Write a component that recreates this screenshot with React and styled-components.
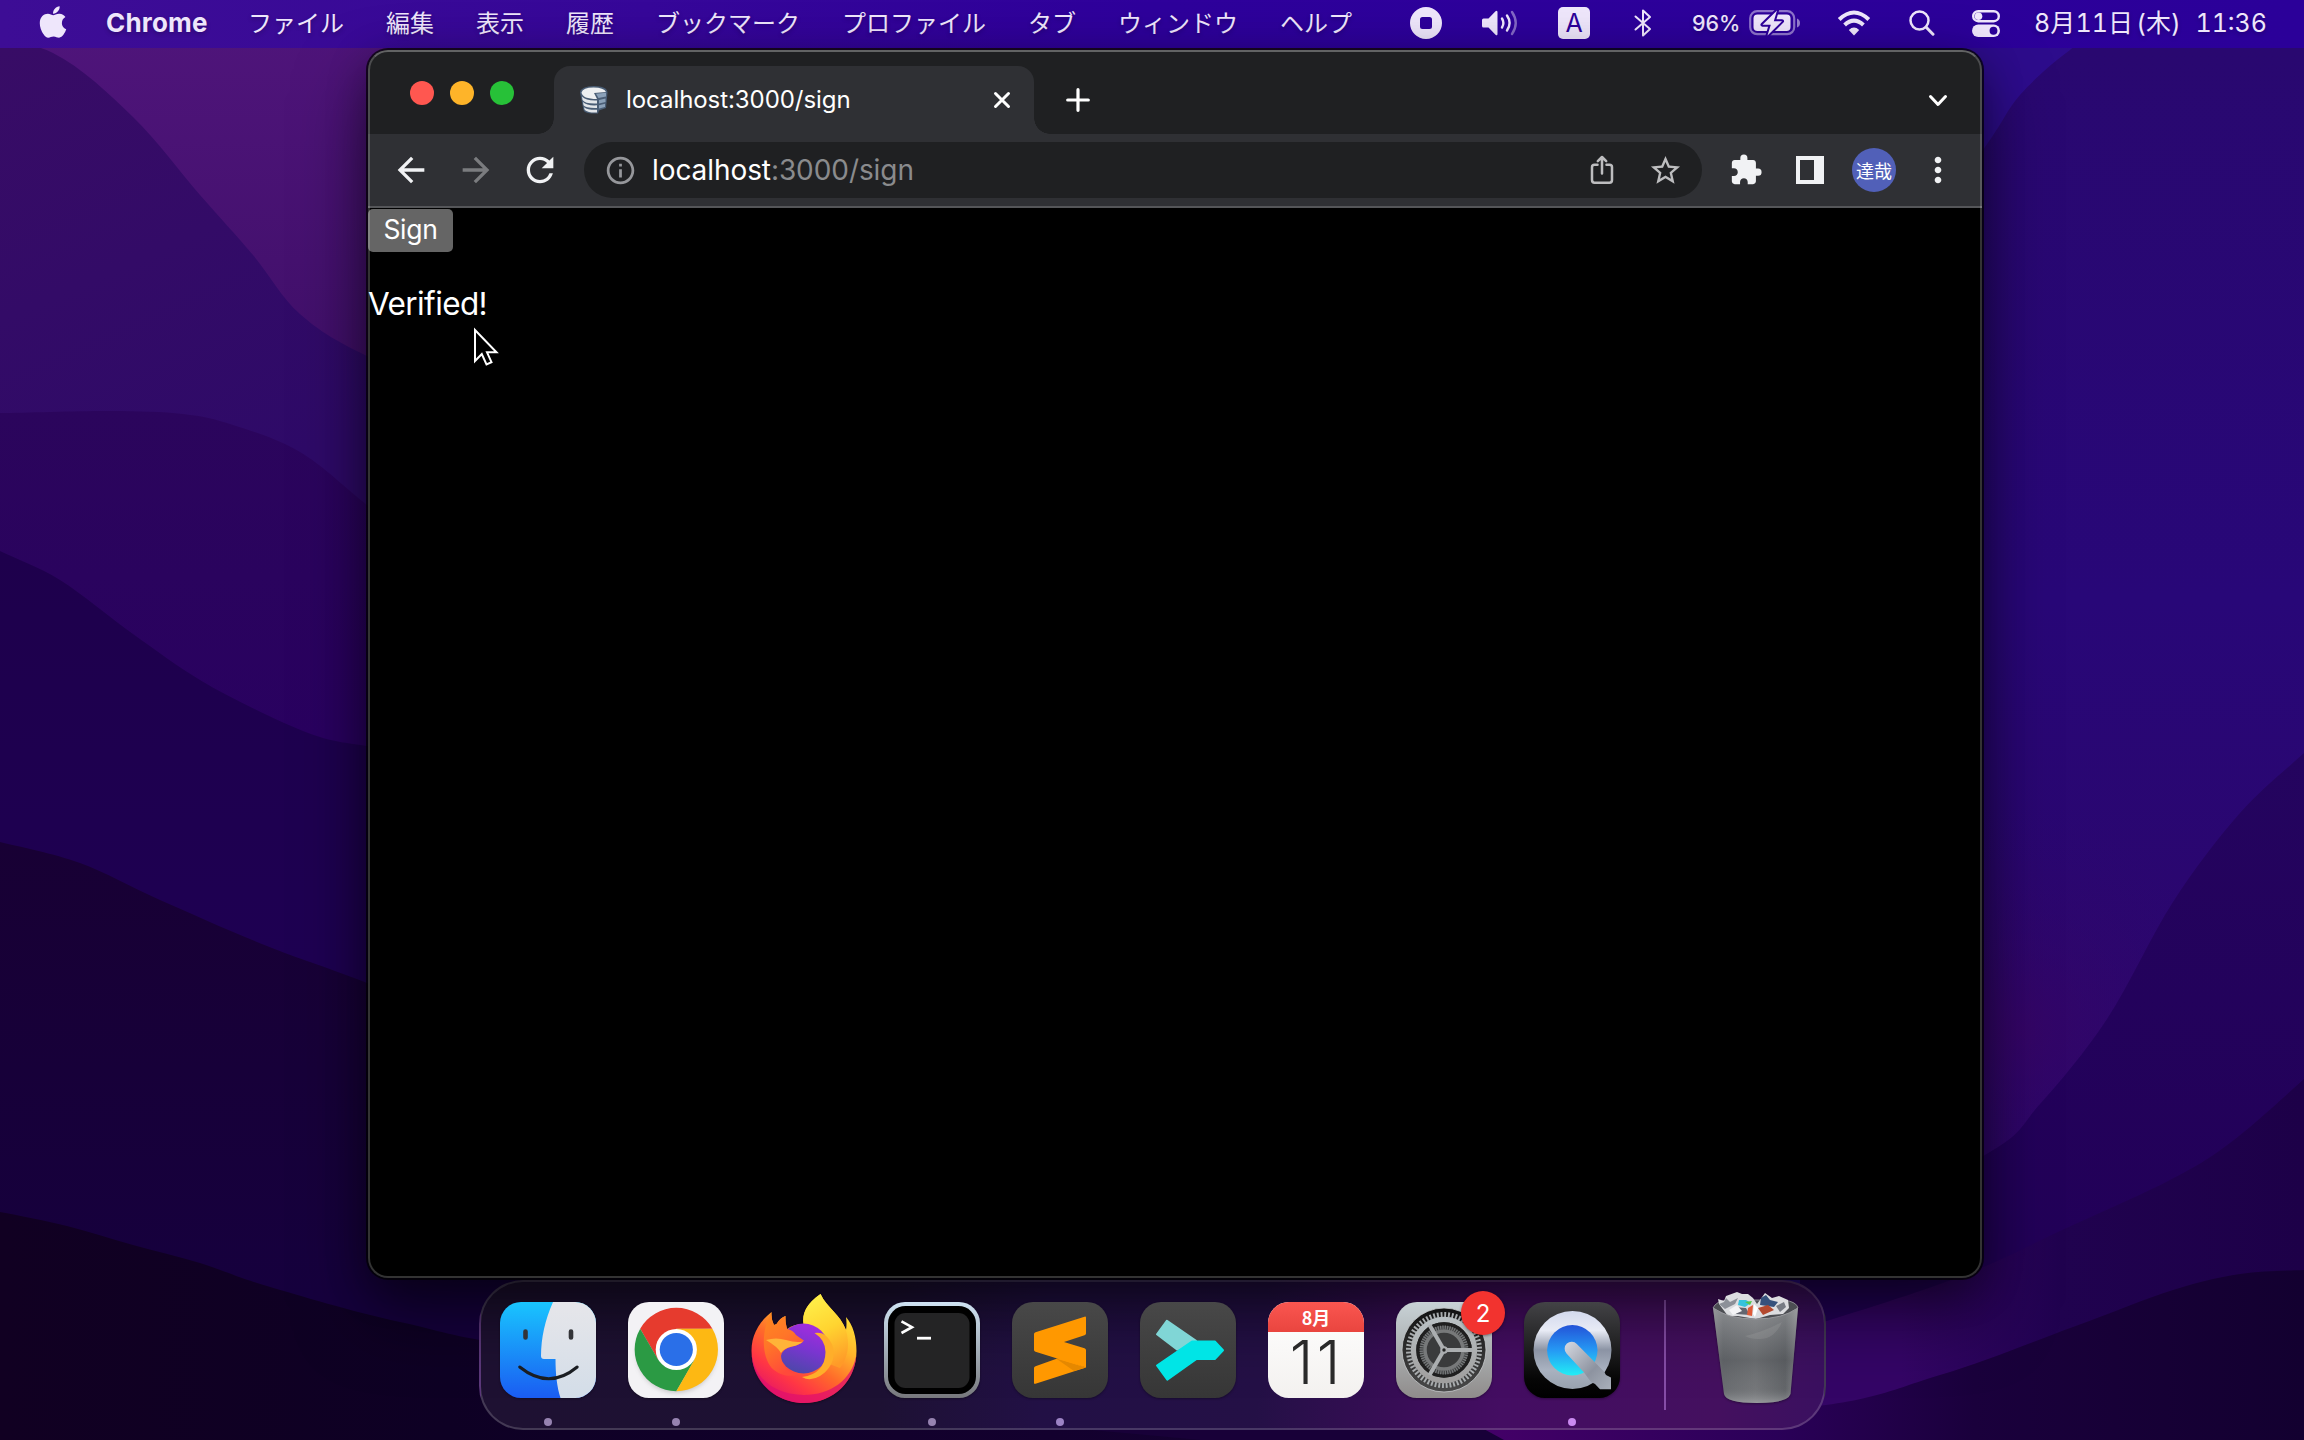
import React from 'react';
import styled, { createGlobalStyle } from 'styled-components';
import { FaApple } from 'react-icons/fa';
import {
  MdArrowBack,
  MdArrowForward,
  MdRefresh,
  MdInfoOutline,
  MdExtension,
  MdStarOutline,
  MdMoreVert,
} from 'react-icons/md';

const GlobalStyle = createGlobalStyle`
  * { box-sizing: border-box; }
  body {
    margin: 0;
    background: #14003a;
    overflow: hidden;
    font-family: Inter, 'Noto Sans CJK JP', 'Liberation Sans', sans-serif;
  }
`;

const Desktop = styled.div`
  position: relative;
  isolation: isolate;
  display: flex;
  flex-direction: column;
  align-items: flex-start;
  width: 2304px;
  height: 1440px;
  overflow: hidden;
`;

const WallpaperArt = styled.svg`
  position: absolute;
  inset: 0;
  z-index: -1;
  width: 2304px;
  height: 1440px;
`;

/* ---------- menu bar ---------- */

const MenuBar = styled.header`
  display: flex;
  align-items: center;
  justify-content: space-between;
  width: 100%;
  height: 48px;
  padding: 0 37px 2px 35px;
  color: #eee6fb;
  background: linear-gradient(90deg, #3d0d95 0%, #360799 28%, #2e009b 50%, #2b0099 100%);
  text-shadow: 0 2px 4px rgba(0, 0, 0, 0.25);
`;

const Menus = styled.nav`
  display: flex;
  align-items: center;
  padding-bottom: 2px;
`;

const AppleLogo = styled(FaApple)`
  font-size: 36px;
  margin-right: 35px;
  margin-top: -1px;
`;

const AppName = styled.span`
  width: 142px;
  font-size: 26px;
  font-weight: 700;
  letter-spacing: ${(p) => p.$tracking}px;
  white-space: nowrap;
`;

const MenuItems = styled.div`
  display: flex;
  gap: 42px;
`;

const MenuItem = styled.span`
  font-family: 'Noto Sans CJK JP', sans-serif;
  font-size: 24px;
  line-height: 36px;
  white-space: nowrap;
`;

const StatusIcons = styled.div`
  display: flex;
  align-items: center;
`;

const StatusSlot = styled.span`
  display: flex;
  align-items: center;
  margin-right: ${(p) => p.$after}px;
`;

const InputSource = styled.span`
  display: grid;
  place-items: center;
  width: 32px;
  height: 32px;
  border-radius: 5px;
  background: #eee6fb;
  color: #2d0099;
  font-size: 25px;
  text-shadow: none;
`;

const Percent = styled.span`
  width: 57px;
  font-size: 21.5px;
  font-weight: 500;
  letter-spacing: ${(p) => p.$tracking}px;
  white-space: nowrap;
`;

const Clock = styled.span`
  display: flex;
  align-items: baseline;
  justify-content: space-between;
  width: 233px;
  margin-top: -1px;
  font-size: 25px;
  line-height: 36px;
  font-variant-numeric: tabular-nums;
  white-space: nowrap;
`;

const ClockPart = styled.span`
  letter-spacing: ${(p) => p.$tracking}px;
`;

const Weekday = styled.span`
  margin-left: 3px;
`;

/* ---------- browser window ---------- */

const BrowserWindow = styled.section`
  position: relative;
  display: flex;
  flex-direction: column;
  width: 1614px;
  height: 1228px;
  margin: 2px 0 0 368px;
  border-radius: 20px;
  background: #000;
  box-shadow: 0 0 0 2px rgba(0, 0, 0, 0.7), 0 36px 70px rgba(0, 0, 0, 0.5), 0 10px 40px rgba(0, 0, 0, 0.3);
  &::after {
    content: '';
    position: absolute;
    inset: 0;
    border: 2px solid rgba(255, 255, 255, 0.2);
    border-top-color: rgba(255, 255, 255, 0.3);
    border-radius: 20px;
    pointer-events: none;
  }
`;

const TabStrip = styled.div`
  display: flex;
  align-items: flex-end;
  height: 84px;
  padding-right: 34px;
  border-radius: 20px 20px 0 0;
  background: #1f2022;
`;

const TrafficLights = styled.div`
  display: flex;
  gap: 16px;
  width: 186px;
  padding-left: 42px;
  align-self: flex-start;
  margin-top: 31px;
`;

const Light = styled.span`
  width: 24px;
  height: 24px;
  border-radius: 50%;
  background: ${(p) => p.$color};
`;

const Tab = styled.div`
  position: relative;
  display: flex;
  align-items: center;
  width: 480px;
  height: 68px;
  padding: 0 23px 0 25px;
  border-radius: 16px 16px 0 0;
  background: #2f3034;
  &::before,
  &::after {
    content: '';
    position: absolute;
    bottom: 0;
    width: 16px;
    height: 16px;
  }
  &::before {
    left: -16px;
    background: radial-gradient(circle at 0 0, transparent 15.5px, #2f3034 16px);
  }
  &::after {
    right: -16px;
    background: radial-gradient(circle at 100% 0, transparent 15.5px, #2f3034 16px);
  }
`;

const TabTitle = styled.span`
  flex: 1;
  margin: -1px 0 0 17px;
  color: #fff;
  font-size: 24px;
  letter-spacing: ${(p) => p.$tracking}px;
  white-space: nowrap;
`;

const NewTab = styled.span`
  display: flex;
  align-self: center;
  margin: 16px 0 0 32px;
`;

const TabSearch = styled.span`
  display: flex;
  align-self: center;
  margin: 17px 0 0 auto;
`;

const Toolbar = styled.div`
  display: flex;
  align-items: center;
  height: 74px;
  background: #2f3034;
  border-bottom: 2px solid #555659;
`;

const NavButton = styled.span`
  display: flex;
  margin-left: ${(p) => p.$before}px;
  color: ${(p) => (p.$dim ? '#7b7c7f' : '#f1f2f4')};
  font-size: ${(p) => p.$size}px;
`;

const AddressBar = styled.div`
  display: flex;
  align-items: center;
  width: 1118px;
  height: 56px;
  margin-left: 24px;
  padding: 0 19px 0 20px;
  border-radius: 28px;
  background: #1f2022;
  color: #bdbdbf;
`;

const InfoIcon = styled(MdInfoOutline)`
  font-size: 33px;
  color: #96979b;
`;

const Address = styled.span`
  flex: 1;
  margin-left: 15px;
  color: #8a8b8d;
  font-size: 28px;
  letter-spacing: ${(p) => p.$tracking}px;
  white-space: nowrap;
`;

const Host = styled.span`
  color: #fff;
`;

const StarIcon = styled(MdStarOutline)`
  margin-left: 34px;
  font-size: 35px;
`;

const Avatar = styled.span`
  display: grid;
  place-items: center;
  width: 44px;
  height: 44px;
  margin-left: 28px;
  border-radius: 50%;
  background: #5160b8;
  color: #fff;
  font-family: 'Noto Sans CJK JP', sans-serif;
  font-size: 18px;
  line-height: 42px;
`;

const Page = styled.main`
  flex: 1;
  display: flex;
  flex-direction: column;
  align-items: flex-start;
  padding-top: 1px;
`;

const SignButton = styled.button`
  width: 85px;
  height: 43px;
  padding: 0 0 3px;
  border: 0;
  border-radius: 5px;
  background: #656565;
  color: #fff;
  font-family: Inter, 'Liberation Sans', sans-serif;
  font-size: 26.5px;
  letter-spacing: ${(p) => p.$tracking}px;
`;

const Result = styled.p`
  margin: 32px 0 0;
  color: #fff;
  font-family: Inter, 'Liberation Sans', sans-serif;
  font-size: 31.5px;
  line-height: 40px;
  letter-spacing: ${(p) => p.$tracking}px;
`;

const Pointer = styled.svg`
  position: absolute;
  left: 105px;
  top: 277px;
  width: 26px;
  height: 40px;
`;

/* ---------- dock ---------- */

const Dock = styled.footer`
  display: flex;
  width: 1347px;
  height: 150px;
  margin: 2px 0 0 479px;
  padding: 20px 0 0 19px;
  border: 2px solid rgba(255, 255, 255, 0.17);
  border-radius: 44px;
  background: linear-gradient(
    95deg,
    #1e1132 0%,
    #1d1133 30%,
    #221045 42%,
    #241046 58%,
    #370d55 68%,
    #440d62 76%,
    #44105f 92%,
    #3a1060 100%
  );
`;

const DockSlot = styled.div`
  position: relative;
  display: flex;
  flex-direction: column;
  align-items: center;
  width: 96px;
  margin-right: ${(p) => p.$after ?? 32}px;
`;

const RunningDot = styled.i`
  width: 8px;
  height: 8px;
  margin-top: 20px;
  border-radius: 50%;
  background: ${(p) => p.$color};
`;

const IconArt = styled.svg`
  flex: none;
  width: 96px;
  height: 96px;
  overflow: visible;
  filter: drop-shadow(0 1px 1px rgba(0, 0, 0, 0.35));
`;

const CalendarTile = styled.div`
  display: flex;
  flex-direction: column;
  width: 96px;
  height: 96px;
  border-radius: 21px;
  overflow: hidden;
  background: linear-gradient(#fff, #f3f1ef);
  text-align: center;
`;

const CalendarMonth = styled.span`
  height: 30px;
  background: linear-gradient(#fa5650, #e9453f);
  color: #fff;
  font-family: 'Noto Sans CJK JP', sans-serif;
  font-size: 18px;
  font-weight: 700;
  line-height: 31px;
`;

const CalendarDay = styled.span`
  padding-right: 2px;
  color: #2a2a2a;
  font-family: Inter, sans-serif;
  font-size: 60px;
  font-weight: 300;
  line-height: 61px;
  letter-spacing: ${(p) => p.$tracking}px;
  margin-right: ${(p) => -p.$tracking}px;
`;

const Badge = styled.span`
  position: absolute;
  left: 65px;
  top: -11px;
  display: grid;
  place-items: center;
  width: 44px;
  height: 44px;
  border-radius: 50%;
  background: #f2332f;
  color: #fff;
  font-size: 24px;
  box-shadow: 0 1px 3px rgba(0, 0, 0, 0.4);
`;

const Divider = styled.span`
  width: 2px;
  height: 110px;
  margin: -2px 42px 0 0;
  background: rgba(190, 130, 225, 0.55);
`;

/* ---------- drawings ---------- */

/* Turns a list of points into a smooth curve (Catmull-Rom to Bezier). */
const curveThrough = (points) =>
  points.slice(0, -1).reduce((path, p1, i) => {
    const p0 = points[i - 1] ?? p1;
    const p2 = points[i + 1];
    const p3 = points[i + 2] ?? p2;
    const c1 = [p1[0] + (p2[0] - p0[0]) / 6, p1[1] + (p2[1] - p0[1]) / 6];
    const c2 = [p2[0] - (p3[0] - p1[0]) / 6, p2[1] - (p3[1] - p1[1]) / 6];
    return `${path}C${c1.join(' ')} ${c2.join(' ')} ${p2.join(' ')}`;
  }, `M${points[0].join(' ')}`);

const LEFT_RIDGES = [
  { fill: 'wB', points: [[-40, 30], [53, 53], [133, 117], [200, 195], [253, 255], [300, 314], [367, 356], [480, 400]] },
  { fill: 'wC', points: [[-40, 412], [0, 413], [110, 411], [183, 414], [233, 425], [300, 452], [367, 505], [470, 590]] },
  { fill: 'wD', points: [[-40, 530], [0, 551], [60, 580], [133, 634], [200, 680], [267, 715], [320, 737], [367, 746], [470, 760]] },
  { fill: 'wE', points: [[-40, 834], [0, 842], [80, 863], [160, 900], [267, 946], [367, 983], [560, 1060], [1500, 1200]] },
  { fill: 'wF', points: [[-40, 1206], [0, 1212], [67, 1226], [133, 1245], [200, 1263], [267, 1286], [400, 1322], [560, 1350], [1000, 1380], [1500, 1400]] },
];

const RIGHT_RIDGES = [
  { fill: 'rB', points: [[1800, 420], [1900, 260], [1985, 147], [2020, 95], [2070, 50], [2110, 30], [2330, 30]] },
  { fill: 'rC', points: [[1800, 1240], [1985, 1155], [2040, 1104], [2107, 1019], [2173, 902], [2240, 813], [2304, 753], [2340, 720]] },
  { fill: 'rD', points: [[1700, 1360], [1940, 1284], [2073, 1225], [2170, 1180], [2230, 1143], [2304, 1079], [2340, 1045]] },
  { fill: 'rE', points: [[1480, 1420], [1800, 1408], [1940, 1375], [2073, 1327], [2173, 1290], [2240, 1274], [2304, 1270], [2340, 1270]] },
];

const Wallpaper = () => (
  <WallpaperArt viewBox="0 0 2304 1440" preserveAspectRatio="none">
    <defs>
      <linearGradient id="wA" x1="0" y1="0" x2="0" y2="400" gradientUnits="userSpaceOnUse">
        <stop offset="0" stopColor="#50157c" />
        <stop offset="1" stopColor="#3f0f68" />
      </linearGradient>
      <linearGradient id="wB" x1="0" y1="50" x2="200" y2="500" gradientUnits="userSpaceOnUse">
        <stop offset="0" stopColor="#380c66" />
        <stop offset="1" stopColor="#2e0a68" />
      </linearGradient>
      <linearGradient id="wC" x1="0" y1="410" x2="0" y2="740" gradientUnits="userSpaceOnUse">
        <stop offset="0" stopColor="#2b055c" />
        <stop offset="1" stopColor="#290160" />
      </linearGradient>
      <linearGradient id="wD" x1="0" y1="550" x2="0" y2="960" gradientUnits="userSpaceOnUse">
        <stop offset="0" stopColor="#1e004c" />
        <stop offset="1" stopColor="#1e0052" />
      </linearGradient>
      <linearGradient id="wE" x1="0" y1="840" x2="0" y2="1300" gradientUnits="userSpaceOnUse">
        <stop offset="0" stopColor="#180034" />
        <stop offset="1" stopColor="#16003e" />
      </linearGradient>
      <linearGradient id="wF" x1="0" y1="0" x2="1500" y2="0" gradientUnits="userSpaceOnUse">
        <stop offset="0" stopColor="#110022" />
        <stop offset="0.3" stopColor="#0e0024" />
        <stop offset="0.6" stopColor="#12002c" />
        <stop offset="1" stopColor="#160034" />
      </linearGradient>
      <linearGradient id="rB" x1="0" y1="50" x2="0" y2="1150" gradientUnits="userSpaceOnUse">
        <stop offset="0" stopColor="#290870" />
        <stop offset="0.5" stopColor="#280778" />
        <stop offset="1" stopColor="#2c0668" />
      </linearGradient>
      <radialGradient id="rGlow" cx="2020" cy="1030" r="230" gradientUnits="userSpaceOnUse">
        <stop offset="0" stopColor="#380564" stopOpacity="0.7" />
        <stop offset="1" stopColor="#2b0670" stopOpacity="0" />
      </radialGradient>
      <linearGradient id="rC" x1="0" y1="750" x2="0" y2="1250" gradientUnits="userSpaceOnUse">
        <stop offset="0" stopColor="#24045f" />
        <stop offset="1" stopColor="#220058" />
      </linearGradient>
      <linearGradient id="rD" x1="1900" y1="0" x2="2304" y2="0" gradientUnits="userSpaceOnUse">
        <stop offset="0" stopColor="#340566" />
        <stop offset="0.4" stopColor="#20024f" />
        <stop offset="1" stopColor="#1d0048" />
      </linearGradient>
      <linearGradient id="rE" x1="1480" y1="0" x2="2304" y2="0" gradientUnits="userSpaceOnUse">
        <stop offset="0" stopColor="#440068" />
        <stop offset="0.36" stopColor="#2a0058" />
        <stop offset="0.6" stopColor="#1a003c" />
        <stop offset="1" stopColor="#130030" />
      </linearGradient>
    </defs>
    <rect width="1500" height="1440" fill="url(#wA)" />
    {LEFT_RIDGES.map(({ fill, points }) => (
      <path key={fill} d={`${curveThrough(points)}V1440H-40Z`} fill={`url(#${fill})`} />
    ))}

    <rect x="1500" y="40" width="804" height="1400" fill="#2d0c8c" />
    {RIGHT_RIDGES.map(({ fill, points }, i) => (
      <React.Fragment key={fill}>
        <path d={`${curveThrough(points)}V1440H${points[0][0]}Z`} fill={`url(#${fill})`} />
        {i === 0 && <rect x="1780" y="780" width="524" height="500" fill="url(#rGlow)" />}
      </React.Fragment>
    ))}
    <path d="M1070 1428L1200 1440H1504L1482 1428Z" fill="#180038" />
  </WallpaperArt>
);

const RecordIcon = () => (
  <svg width="32" height="32" viewBox="0 0 32 32">
    <path
      fillRule="evenodd"
      fill="#eee6fb"
      d="M16 0a16 16 0 1 1 0 32a16 16 0 0 1 0-32ZM12.500 10a2.500 2.500 0 0 0-2.500 2.500v7a2.500 2.500 0 0 0 2.500 2.500h7a2.500 2.500 0 0 0 2.500-2.500v-7a2.500 2.500 0 0 0-2.500-2.500Z"
    />
  </svg>
);

const SpeakerIcon = () => (
  <svg width="36" height="28" viewBox="0 0 36 28" fill="none" strokeLinecap="round" strokeWidth="2.400">
    <path fill="#eee6fb" d="M1.500 9.500h5l7-7.200q2-1.500 2 1v21.400q0 2.500-2 1l-7-7.200h-5q-1.500 0-1.500-1.500v-6q0-1.500 1.500-1.500Z" />
    <path stroke="#eee6fb" d="M20 9.500q2.800 4.500 0 9" />
    <path stroke="#eee6fb" d="M25 6.500q5.200 7.500 0 15" />
    <path stroke="#eee6fb" strokeOpacity="0.45" d="M30 3q7.500 11 0 22" />
  </svg>
);

const BluetoothIcon = () => (
  <svg width="18" height="28" viewBox="0 0 18 28" fill="none" stroke="#eee6fb" strokeWidth="2" strokeLinejoin="round" strokeLinecap="round">
    <path d="M1.500 7.500L16 20L9 26.500V1.500L16 8L1.500 20.500" />
  </svg>
);

const BatteryIcon = () => (
  <svg width="52" height="26" viewBox="0 0 52 26" overflow="visible">
    <rect x="1.200" y="1.200" width="44" height="23" rx="7" fill="none" stroke="#eee6fb" strokeOpacity="0.5" strokeWidth="2.200" />
    <path d="M48 8.500q3 1 3 4.500t-3 4.500Z" fill="#eee6fb" fillOpacity="0.55" />
    <rect x="4.500" y="4.500" width="37" height="16.500" rx="4" fill="#eee6fb" />
    <path
      d="M28 0.500L13.500 14.700H21.800L18.500 25.500L33 11.200H24.800Z"
      fill="#eee6fb"
      stroke="#2e009b"
      strokeWidth="4"
      strokeLinejoin="round"
      paintOrder="stroke"
    />
  </svg>
);

const WifiIcon = () => (
  <svg width="34" height="26" viewBox="0 0 34 26" fill="none" stroke="#eee6fb" strokeWidth="4">
    <path d="M2.200 9.500Q17-4.500 31.800 9.500" />
    <path d="M7.600 15Q17 6.200 26.400 15" />
    <path d="M17 25.500L11.800 20Q17 15.200 22.200 20Z" fill="#eee6fb" stroke="none" />
  </svg>
);

const SearchIcon = () => (
  <svg width="26" height="26" viewBox="0 0 26 26" fill="none" stroke="#eee6fb" strokeLinecap="round">
    <circle cx="10.500" cy="10.500" r="9" strokeWidth="2.500" />
    <path d="M17.200 17.200L24 24.200" strokeWidth="3" />
  </svg>
);

const ControlCenterIcon = () => (
  <svg width="28" height="27" viewBox="0 0 28 27">
    <rect x="1.200" y="1.200" width="25.600" height="10" rx="5" fill="none" stroke="#eee6fb" strokeWidth="2.400" />
    <circle cx="6.500" cy="6.200" r="3.800" fill="#eee6fb" />
    <rect x="0" y="14.500" width="28" height="12.500" rx="6.250" fill="#eee6fb" />
    <circle cx="21.500" cy="20.750" r="3.900" fill="#2b0099" />
  </svg>
);

const Favicon = () => (
  <svg width="30" height="30" viewBox="0 0 30 30">
    <path d="M1 7.500Q2 1 15 1T28.500 7.500L27 23L20 25.500L19 28.500H12Q5 27.500 4.500 25Z" fill="#4a5d75" />
    <path d="M2.500 7.500Q4 2.500 14.500 2.500T27 7L15 8L18 14Q3.500 14 2.500 7.500Z" fill="#eef0f2" />
    <path d="M3 11.500Q7 16 18 15.500V18.500Q6 19 3.500 15ZM4 17Q8 21 18 20.300V23Q7 23.300 4.500 20.300ZM5 22.200Q9 25.200 18 24.800V27.500H12.500Q7 26.500 5.500 24.500Z" fill="#e3e6ea" />
    <path d="M17 8.700L27 7.800V11.500L19.500 13ZM20 15L26.500 13.500V17L20 18.500ZM20 20.200L26 18.700V22L20 23.500Z" fill="#8aa0b8" />
  </svg>
);

const CloseIcon = () => (
  <svg width="18" height="18" viewBox="0 0 18 18" stroke="#fff" strokeWidth="3" strokeLinecap="round">
    <path d="M2.500 2.500L15.500 15.500M15.500 2.500L2.500 15.500" />
  </svg>
);

const PlusIcon = () => (
  <svg width="24" height="24" viewBox="0 0 24 24" stroke="#fff" strokeWidth="3.200" strokeLinecap="round">
    <path d="M12 1.700V22.300M1.700 12H22.300" />
  </svg>
);

const ChevronIcon = () => (
  <svg width="20" height="14" viewBox="0 0 20 14" fill="none" stroke="#fff" strokeWidth="3" strokeLinecap="round" strokeLinejoin="round">
    <path d="M2.500 2.500L10 10.500L17.500 2.500" />
  </svg>
);

const ShareIcon = () => (
  <svg width="24" height="30" viewBox="0 0 24 30" fill="none" stroke="#bdbdbf" strokeWidth="2.500" strokeLinecap="round" strokeLinejoin="round">
    <path d="M7.500 9.700H4.500Q2 9.700 2 12.200V25Q2 27.700 4.500 27.700H19.500Q22 27.700 22 25V12.200Q22 9.700 19.500 9.700H16.500M12 18.500V2.500M7.800 6.200L12 2L16.200 6.200" />
  </svg>
);

const SidePanelIcon = () => (
  <svg width="28" height="28" viewBox="0 0 28 28">
    <path fillRule="evenodd" fill="#f1f2f4" d="M0 0H28V28H0ZM4 4V24H18V4Z" />
  </svg>
);

const FinderArt = () => (
  <IconArt viewBox="0 0 96 96">
    <defs>
      <linearGradient id="fdBlue" x1="0" y1="0" x2="0" y2="1">
        <stop offset="0" stopColor="#19c5fe" />
        <stop offset="1" stopColor="#1a5cf2" />
      </linearGradient>
      <linearGradient id="fdGray" x1="0" y1="0" x2="0" y2="1">
        <stop offset="0" stopColor="#e6e6ea" />
        <stop offset="1" stopColor="#d3dde8" />
      </linearGradient>
      <clipPath id="fdClip">
        <rect width="96" height="96" rx="21" />
      </clipPath>
    </defs>
    <g clipPath="url(#fdClip)">
      <rect width="96" height="96" fill="url(#fdBlue)" />
      <path d="M53 0C45 18 41 36 41 54Q41 57 44 57H55.500C55.500 72 57 85 60.500 96H96V0Z" fill="url(#fdGray)" />
    </g>
    <g fill="none" strokeLinecap="round">
      <path d="M25.500 29.500V35.500M71 29.500V35.500" stroke="#333438" strokeWidth="4.600" />
      <path d="M19.700 65Q49 88.500 77.200 65" stroke="#1a1d22" strokeWidth="3" />
    </g>
  </IconArt>
);

const ChromeArt = () => (
  <IconArt viewBox="0 0 96 96">
    <defs>
      <filter id="crSoft" x="-20%" y="-20%" width="140%" height="140%">
        <feGaussianBlur stdDeviation="2.500" />
      </filter>
    </defs>
    <rect width="96" height="96" rx="21" fill="#f3f2f5" />
    <circle cx="48.300" cy="51" r="39.500" fill="#777" opacity="0.4" filter="url(#crSoft)" />
    <path d="M12.200 26.700A41.700 41.700 0 0 1 84.400 26.700L48.300 26.700L30.300 57.900Z" fill="#e63b2e" />
    <path d="M12.200 26.700L30.300 57.900L66.300 57.900L48.300 89.200A41.700 41.700 0 0 1 12.200 26.700Z" fill="#2b9a44" />
    <path d="M84.400 26.700A41.700 41.700 0 0 1 48.300 89.200L66.300 57.900L48.300 26.700Z" fill="#fdb813" />
    <circle cx="48.300" cy="47.500" r="20.600" fill="#fff" />
    <circle cx="48.300" cy="47.500" r="16.600" fill="#2a6fe8" />
  </IconArt>
);

const FirefoxArt = () => (
  <IconArt viewBox="0 0 96 96">
    <defs>
      <linearGradient id="ffBody" x1="0.850" y1="0.100" x2="0.250" y2="1">
        <stop offset="0" stopColor="#ffe83a" />
        <stop offset="0.300" stopColor="#ffb52a" />
        <stop offset="0.560" stopColor="#ff6a2a" />
        <stop offset="0.780" stopColor="#ff3644" />
        <stop offset="1" stopColor="#e3136a" />
      </linearGradient>
      <linearGradient id="ffGlobe" x1="0.700" y1="0" x2="0.350" y2="1">
        <stop offset="0" stopColor="#a62be0" />
        <stop offset="0.500" stopColor="#7a35d0" />
        <stop offset="1" stopColor="#4b48a8" />
      </linearGradient>
      <linearGradient id="ffHead" x1="0" y1="0" x2="0.400" y2="1">
        <stop offset="0" stopColor="#ff8a1f" />
        <stop offset="0.500" stopColor="#ff7528" />
        <stop offset="1" stopColor="#ff4a3a" />
      </linearGradient>
      <linearGradient id="ffFlame" x1="0.300" y1="0" x2="0.600" y2="1">
        <stop offset="0" stopColor="#fff04a" />
        <stop offset="0.500" stopColor="#ffd430" />
        <stop offset="1" stopColor="#ff9a28" />
      </linearGradient>
    </defs>
    <path
      d="M15.500 10C3 20-4.500 33-4.500 49C-4.500 78 19 101 48 101C78 101 100.500 78 100.500 49C100.500 35 97 23 90 15Q91 22 90 28C84 12 71 6 64.500-8C50 2 46 12 47.500 22Q38 22 31 27Q29 20 29.500 14Q24 16 20.500 22L18 23Q15 17 15.500 10Z"
      fill="url(#ffBody)"
    />
    <path d="M-4.300 53C0 80 22 93 48 93C74 93 96 78 100.300 53C99 80 77 101 48 101C19 101-3 80-4.300 53Z" fill="#e0106c" opacity="0.750" />
    <path d="M64.500-8C71 6 84 12 90 28Q96 50 84 66L68 60Q76 40 62 27L47.500 22C46 12 50 2 64.500-8Z" fill="url(#ffFlame)" />
    <circle cx="47.500" cy="46.500" r="25" fill="url(#ffGlobe)" />
    <path d="M58.500 31Q65 30 69 33C84 46 78 66 64 74Q54 80 46 75Q69 72 69.500 50Q69.500 38 58.500 31Z" fill="#ffae2a" />
    <path
      d="M15.500 10Q15 17 18 23L20.500 22Q24 16 29.500 14Q29 20 31 27Q37 28 40 33Q44 36 48 38.500Q45 42.500 36 44.500Q26 47 25 54Q26 68 41 73Q28 76 18 68C6 58 4 30 15.500 10Z"
      fill="url(#ffHead)"
    />
    <path d="M10 38Q20 35 30 38Q40 41 47 39.500Q43 43 36 44.500Q28 46 25 51Q22 45 10 38Z" fill="#ffb338" />
  </IconArt>
);

const TerminalArt = () => (
  <IconArt viewBox="0 0 96 96">
    <defs>
      <linearGradient id="tmRim" x1="0" y1="0" x2="0" y2="1">
        <stop offset="0" stopColor="#cfe3f3" />
        <stop offset="1" stopColor="#77787c" />
      </linearGradient>
    </defs>
    <rect width="96" height="96" rx="21" fill="url(#tmRim)" />
    <rect x="4" y="4" width="88" height="88" rx="17.500" fill="#000" />
    <rect x="10.500" y="11" width="75" height="75" rx="11" fill="#242425" />
    <path d="M17.500 19.300L28 25.200L17.500 31" fill="none" stroke="#fff" strokeWidth="2.600" />
    <path d="M33 36.200H47" stroke="#fff" strokeWidth="2.800" />
  </IconArt>
);

const DarkTile = () => (
  <>
    <defs>
      <linearGradient id="darkTile" x1="0" y1="0" x2="0" y2="1">
        <stop offset="0" stopColor="#484848" />
        <stop offset="1" stopColor="#363636" />
      </linearGradient>
    </defs>
    <rect width="96" height="96" rx="21" fill="url(#darkTile)" />
  </>
);

const SublimeArt = () => (
  <IconArt viewBox="0 0 96 96">
    <DarkTile />
    <path d="M22 66Q22 64.700 23.500 64.200L48 55.500L74 65.500L23.500 81.700Q22 82.200 22 81Z" fill="#ff9800" />
    <path d="M44 56.500L74 65.500L62 69Z" fill="#e58800" />
    <path d="M22 32Q22 30.700 23.500 30.200L72.500 14.700Q74 14.200 74 15.700V31.500Q74 32.700 72.500 33.200L52 40L72.500 46.300Q74 46.800 74 48.300V65.500L23.500 49.700Q22 49.200 22 48Z" fill="#ff9800" />
  </IconArt>
);

const MergeArt = () => (
  <IconArt viewBox="0 0 96 96">
    <DarkTile />
    <g strokeLinejoin="round" strokeWidth="2">
      <path d="M27 18.700L17 32.300L37 47.500L56 38.800Z" fill="#80d6d6" stroke="#80d6d6" />
      <path d="M17 63.500L52 39.500H74.800L83 48.300L74.800 57H56.500L27.300 77.600Z" fill="#00e5e6" stroke="#00e5e6" />
    </g>
  </IconArt>
);

const SPOKES = [0, 120, 240];

const SettingsArt = () => (
  <IconArt viewBox="0 0 96 96">
    <defs>
      <linearGradient id="stTile" x1="0" y1="0" x2="0" y2="1">
        <stop offset="0" stopColor="#c8d2d6" />
        <stop offset="1" stopColor="#8f8c8b" />
      </linearGradient>
      <linearGradient id="stDisc" x1="0" y1="0" x2="0" y2="1">
        <stop offset="0" stopColor="#111" />
        <stop offset="1" stopColor="#4a4a4a" />
      </linearGradient>
      <linearGradient id="stGear" x1="0" y1="0" x2="0" y2="1">
        <stop offset="0" stopColor="#b9c0c3" />
        <stop offset="1" stopColor="#a09f9e" />
      </linearGradient>
    </defs>
    <rect width="96" height="96" rx="21" fill="url(#stTile)" />
    <circle cx="48" cy="48" r="42" fill="url(#stDisc)" stroke="#c5c8ca" strokeWidth="0.800" />
    <g fill="none">
      <circle cx="48" cy="48" r="35.500" stroke="#a9adaf" strokeWidth="5" strokeDasharray="1.900 1.818" />
      <circle cx="48" cy="48" r="30.500" stroke="url(#stGear)" strokeWidth="5.500" />
      <circle cx="48" cy="48" r="26" fill="#3a3b3c" stroke="#1f1f1f" strokeWidth="3.500" />
      <circle cx="48" cy="48" r="22.500" stroke="#777a7b" strokeWidth="4" strokeDasharray="1.300 1.056" />
      <circle cx="48" cy="48" r="19" stroke="#77797a" strokeWidth="3.500" />
      {SPOKES.map((angle) => (
        <path key={angle} d="M48 48H77" stroke="#abaeb0" strokeWidth="4" transform={`rotate(${angle} 48 48)`} />
      ))}
    </g>
    <circle cx="48" cy="48" r="3.800" fill="#abaeb0" />
    <circle cx="48" cy="48" r="1.700" fill="#222" />
  </IconArt>
);

const QuickTimeArt = () => (
  <IconArt viewBox="0 0 96 96">
    <defs>
      <linearGradient id="qtTile" x1="0" y1="0" x2="0" y2="1">
        <stop offset="0" stopColor="#434346" />
        <stop offset="0.800" stopColor="#060606" />
        <stop offset="1" stopColor="#000" />
      </linearGradient>
      <linearGradient id="qtRing" x1="0" y1="0" x2="0" y2="1">
        <stop offset="0" stopColor="#d3d9ee" />
        <stop offset="0.250" stopColor="#e8ebf5" />
        <stop offset="0.500" stopColor="#8b93a4" />
        <stop offset="0.750" stopColor="#a9b2c0" />
        <stop offset="1" stopColor="#98a2ae" />
      </linearGradient>
      <linearGradient id="qtBlue" x1="0" y1="0" x2="0" y2="1">
        <stop offset="0" stopColor="#2353d8" />
        <stop offset="0.500" stopColor="#2599f4" />
        <stop offset="1" stopColor="#22eef5" />
      </linearGradient>
      <linearGradient id="qtTail" x1="0" y1="0" x2="1" y2="1">
        <stop offset="0" stopColor="#d6dae2" />
        <stop offset="0.600" stopColor="#8d93a0" />
        <stop offset="1" stopColor="#a9b0ba" />
      </linearGradient>
    </defs>
    <rect width="96" height="96" rx="21" fill="url(#qtTile)" />
    <circle cx="48.500" cy="48" r="39" fill="url(#qtRing)" />
    <circle cx="48.300" cy="48.300" r="25.200" fill="url(#qtBlue)" />
    <path d="M42.500 51.500A7 7 0 0 1 52.800 42L80 69.500L82 73L87 75.500V87.300H76L71 82L67 80L60 70.500Z" fill="url(#qtTail)" />
  </IconArt>
);

const TrashArt = () => (
  <IconArt viewBox="0 0 96 96">
    <defs>
      <linearGradient id="tbBody" x1="0" y1="0" x2="1" y2="0">
        <stop offset="0" stopColor="#85878a" />
        <stop offset="0.120" stopColor="#696c70" />
        <stop offset="0.500" stopColor="#77797c" />
        <stop offset="0.850" stopColor="#606367" />
        <stop offset="1" stopColor="#8e9093" />
      </linearGradient>
      <linearGradient id="tbShade" x1="0" y1="0" x2="0" y2="1">
        <stop offset="0" stopColor="#aeb0b2" stopOpacity="0.450" />
        <stop offset="0.550" stopColor="#4b4e52" stopOpacity="0.400" />
        <stop offset="0.850" stopColor="#6a6c6f" stopOpacity="0.200" />
        <stop offset="1" stopColor="#b5b7b9" stopOpacity="0.550" />
      </linearGradient>
    </defs>
    <path d="M5 6Q8 -1 20 -2H76Q89 0 90 6Q70 19 48 19T5 6Z" fill="#4c4e53" stroke="#8c8a92" strokeWidth="1" />
    <path d="M11 2L10-3L16-1L18-6L29-10L34-8L40-8L45-4L49 2L57-9L64-4L71-6L80-2L81 6L75 12L62 13L48 17L30 14L20 14Z" fill="#dcdde0" />
    <path d="M11 2L16 0L18-4L22 0L30-4L27 2L17 7Z" fill="#8c9098" />
    <path d="M31-2L38-2L43 1L37 5L30 3Z" fill="#35c3dd" />
    <path d="M37 0L44-1L42 3Z" fill="#52c84a" />
    <path d="M26 5L38 6L42 13L28 12Z" fill="#62656f" />
    <path d="M40 6L45 3L44 14L39 13Z" fill="#de5a38" />
    <path d="M53-4L58-7L62-2L70 0L66 5L52 3Z" fill="#35517c" />
    <path d="M50 6L60 3L66 8L55 13Z" fill="#b3492f" />
    <path d="M68 4L76 0L78 5L72 10Z" fill="#777b84" />
    <path d="M21 8L29 3L34 9L25 13Z" fill="#f4f4f6" />
    <path d="M46 2L50 6L47 15L45 12Z" fill="#fff" />
    <path d="M5 6Q20 17 47.500 17T90 6L82.500 92Q80 101 49 101T16 92Z" fill="url(#tbBody)" />
    <path d="M5 6Q20 17 47.500 17T90 6L82.500 92Q80 101 49 101T16 92Z" fill="url(#tbShade)" />
    <path d="M5 6Q20 17 47.500 17T90 6" fill="none" stroke="#97989c" strokeWidth="1" />
    <path d="M37 34Q55 30 74 20Q66 38 50 37Q42 37 37 34Z" fill="#b5b6b8" opacity="0.180" />
  </IconArt>
);

/* ---------- data ---------- */

const MENUS = ['ファイル', '編集', '表示', '履歴', 'ブックマーク', 'プロファイル', 'タブ', 'ウィンドウ', 'ヘルプ'];
const LIGHTS = ['#ff5750', '#feb429', '#27c138'];
const DIM_DOT = '#9683b0';

const DOCK_APPS = [
  { name: 'finder', Art: FinderArt, dot: DIM_DOT },
  { name: 'chrome', Art: ChromeArt, dot: DIM_DOT },
  { name: 'firefox', Art: FirefoxArt },
  { name: 'terminal', Art: TerminalArt, dot: DIM_DOT },
  { name: 'sublime', Art: SublimeArt, dot: '#9c83c4' },
  { name: 'merge', Art: MergeArt },
  { name: 'calendar', Art: CalendarApp },
  { name: 'settings', Art: SettingsArt, badge: '2' },
  { name: 'quicktime', Art: QuickTimeArt, dot: '#ca8af0', after: 44 },
];

function CalendarApp() {
  return (
    <CalendarTile>
      <CalendarMonth>8月</CalendarMonth>
      <CalendarDay $tracking={3.5}>11</CalendarDay>
    </CalendarTile>
  );
}

export default function App() {
  return (
    <Desktop>
      <GlobalStyle />
      <Wallpaper />

      <MenuBar>
        <Menus>
          <AppleLogo />
          <AppName $tracking={0.2}>Chrome</AppName>
          <MenuItems>
            {MENUS.map((label) => (
              <MenuItem key={label}>{label}</MenuItem>
            ))}
          </MenuItems>
        </Menus>
        <StatusIcons>
          <StatusSlot $after={40}><RecordIcon /></StatusSlot>
          <StatusSlot $after={40}><SpeakerIcon /></StatusSlot>
          <StatusSlot $after={44}><InputSource>A</InputSource></StatusSlot>
          <StatusSlot $after={40}><BluetoothIcon /></StatusSlot>
          <StatusSlot $after={0}><Percent $tracking={0}>96%</Percent></StatusSlot>
          <StatusSlot $after={36}><BatteryIcon /></StatusSlot>
          <StatusSlot $after={38}><WifiIcon /></StatusSlot>
          <StatusSlot $after={37}><SearchIcon /></StatusSlot>
          <StatusSlot $after={34}><ControlCenterIcon /></StatusSlot>
          <Clock>
            <ClockPart $tracking={0.1}>
              8月11日<Weekday>(木)</Weekday>
            </ClockPart>
            <ClockPart $tracking={0}>11:36</ClockPart>
          </Clock>
        </StatusIcons>
      </MenuBar>

      <BrowserWindow>
        <TabStrip>
          <TrafficLights>
            {LIGHTS.map((color) => (
              <Light key={color} $color={color} />
            ))}
          </TrafficLights>
          <Tab>
            <Favicon />
            <TabTitle $tracking={-0.06}>localhost:3000/sign</TabTitle>
            <CloseIcon />
          </Tab>
          <NewTab><PlusIcon /></NewTab>
          <TabSearch><ChevronIcon /></TabSearch>
        </TabStrip>
        <Toolbar>
          <NavButton $before={23} $size={40}><MdArrowBack /></NavButton>
          <NavButton $before={25} $size={40} $dim><MdArrowForward /></NavButton>
          <NavButton $before={24} $size={40}><MdRefresh /></NavButton>
          <AddressBar>
            <InfoIcon />
            <Address $tracking={-0.08}>
              <Host>localhost</Host>:3000/sign
            </Address>
            <ShareIcon />
            <StarIcon />
          </AddressBar>
          <NavButton $before={27} $size={34}><MdExtension /></NavButton>
          <NavButton $before={33} $size={28}><SidePanelIcon /></NavButton>
          <Avatar>達哉</Avatar>
          <NavButton $before={22} $size={40}><MdMoreVert /></NavButton>
        </Toolbar>
        <Page>
          <SignButton $tracking={-0.3}>Sign</SignButton>
          <Result $tracking={-0.6}>Verified!</Result>
        </Page>
        <Pointer viewBox="0 0 26 40">
          <path
            d="M2 3V34L8.800 27L13.500 37.500L18.500 35.200L14 25.300H23.500Z"
            fill="#000"
            stroke="#fff"
            strokeWidth="2"
          />
        </Pointer>
      </BrowserWindow>

      <Dock>
        {DOCK_APPS.map(({ name, Art, dot, badge, after }) => (
          <DockSlot key={name} $after={after}>
            <Art />
            {badge && <Badge>{badge}</Badge>}
            {dot && <RunningDot $color={dot} />}
          </DockSlot>
        ))}
        <Divider />
        <DockSlot $after={0}>
          <TrashArt />
        </DockSlot>
      </Dock>
    </Desktop>
  );
}
